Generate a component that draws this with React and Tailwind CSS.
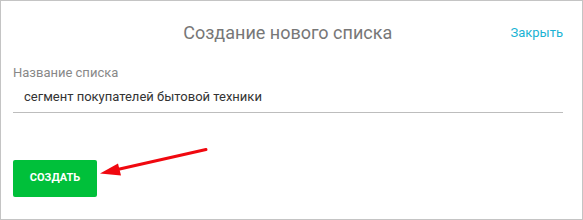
import React from 'react';

const Arrow = () => (
    <svg className="absolute left-[96px] top-[144px]" width="114" height="34" viewBox="96 144 114 34">
        <line x1="205" y1="148.5" x2="112" y2="169.5" stroke="#f0080f" strokeWidth="3" strokeLinecap="round" />
        <polygon points="99,172.5 117,162.5 120,174.5" fill="#f0080f" />
    </svg>
);

const App = () => {
    return (
        <div className="relative w-[583px] h-[220px] bg-white border border-[#c4c4c4] font-['Roboto',sans-serif]">
            <div className="flex items-center h-[64px] pl-[12px] pr-[19px]">
                <div className="flex-1 text-center text-[18px] text-[#777] pl-[52px] pb-[2px]">Создание нового списка</div>
                <a className="text-[13px] text-[#1ab3d4]">Закрыть</a>
            </div>
            <div className="px-[12px]">
                <div className="text-[13px] text-[#888] leading-[16px]">Название списка</div>
                <div className="mt-[6px] w-[550px] border-b border-[#bdbdbd] pl-[11px] pb-[5px] text-[13px] text-[#333] leading-[20px]">
                    сегмент покупателей бытовой техники
                </div>
                <button className="mt-[47px] w-[84px] h-[37px] rounded-[2px] bg-[#00c03a] text-white text-[11px] font-bold">
                    СОЗДАТЬ
                </button>
            </div>
            <Arrow />
        </div>
    );
};

export default App;
